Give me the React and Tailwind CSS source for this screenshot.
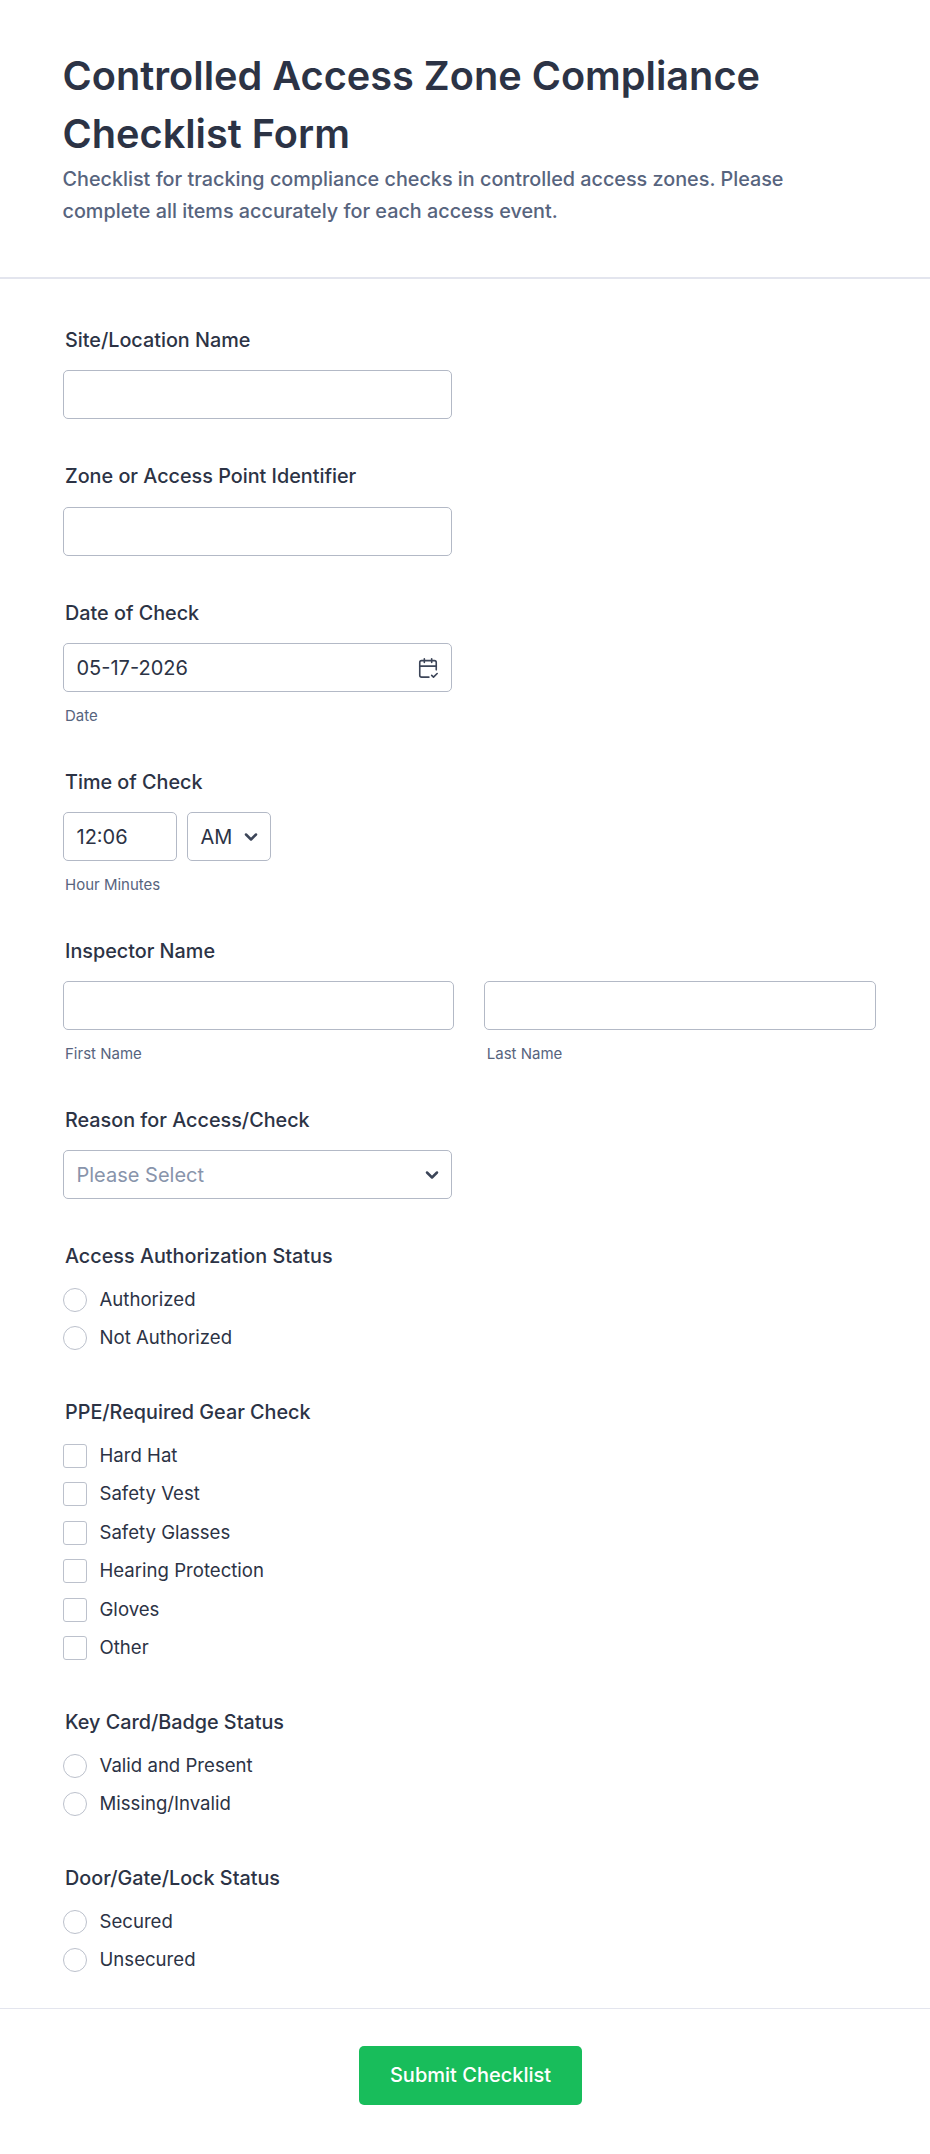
import { CalendarCheck2, ChevronDown } from 'lucide-react';

const FONT = "font-['Inter',sans-serif]";

function Label({ children }) {
    return (
        <div className="mb-[15.5px] px-[2.5px] text-[19.8px] leading-[29px] font-medium text-[#2c3345]">
            {children}
        </div>
    );
}

function Sub({ children }) {
    return (
        <div className="mt-[13px] -mb-[1.5px] px-[2.5px] text-[15px] leading-[21px] text-[#57647e]">
            {children}
        </div>
    );
}

function Box({ className = '', children }) {
    return (
        <div
            className={`flex h-[49px] items-center rounded-[5px] border border-[#b3b9c6] bg-white text-[20px] text-[#2c3345] ${className}`}
        >
            {children}
        </div>
    );
}

function Options({ label, items, square }) {
    return (
        <div className="pb-[5px]">
            <div className="mb-[16.5px] px-[2.5px] text-[19.8px] leading-[29px] font-medium text-[#2c3345]">
                {label}
            </div>
            <div className="flex flex-col gap-[14.5px]">
                {items.map((item) => (
                    <div key={item} className="flex h-[24px] items-center gap-[13px]">
                        <span
                            className={`h-[24px] w-[24px] border border-[#bcc1cc] bg-white ${
                                square ? 'rounded-[3px]' : 'rounded-full'
                            }`}
                        />
                        <span className="text-[18.6px] text-[#2c3345]">{item}</span>
                    </div>
                ))}
            </div>
        </div>
    );
}

export default function App() {
    return (
        <div className={`min-h-[2154px] bg-white ${FONT}`}>
            <header className="border-b-2 border-[#e3e5ee] px-[62.5px] pt-[46.5px] pb-[50.5px]">
                <h1 className="max-w-[760px] text-[39.7px] leading-[58px] font-semibold text-[#2c3345]">
                    Controlled Access Zone Compliance Checklist Form
                </h1>
                <p className="max-w-[760px] text-[19.8px] leading-[32px] font-medium text-[#57647e]">
                    Checklist for tracking compliance checks in controlled access zones. Please
                    complete all items accurately for each access event.
                </p>
            </header>

            <main className="flex flex-col gap-[43px] px-[62.5px] pt-[46.5px]">
                <div>
                    <Label>Site/Location Name</Label>
                    <Box className="w-[389px]" />
                </div>
                <div>
                    <Label>Zone or Access Point Identifier</Label>
                    <Box className="w-[389px]" />
                </div>
                <div>
                    <Label>Date of Check</Label>
                    <Box className="w-[389px] justify-between pr-[12px] pl-[13px]">
                        <span>05-17-2026</span>
                        <CalendarCheck2 size={22} strokeWidth={1.75} className="text-[#3c4558]" />
                    </Box>
                    <Sub>Date</Sub>
                </div>
                <div>
                    <Label>Time of Check</Label>
                    <div className="flex gap-[10px]">
                        <Box className="w-[114px] pl-[13px]">12:06</Box>
                        <Box className="w-[84px] justify-between pr-[9px] pl-[13px]">
                            <span>AM</span>
                            <ChevronDown size={20} strokeWidth={3} className="text-[#3c4558]" />
                        </Box>
                    </div>
                    <Sub>Hour Minutes</Sub>
                </div>
                <div>
                    <Label>Inspector Name</Label>
                    <div className="grid w-[813.5px] grid-cols-2 gap-[30px]">
                        <div>
                            <Box />
                            <Sub>First Name</Sub>
                        </div>
                        <div>
                            <Box />
                            <Sub>Last Name</Sub>
                        </div>
                    </div>
                </div>
                <div>
                    <Label>Reason for Access/Check</Label>
                    <Box className="w-[389px] justify-between pr-[9px] pl-[13px]">
                        <span className="text-[#8894ab]">Please Select</span>
                        <ChevronDown size={20} strokeWidth={3} className="text-[#3c4558]" />
                    </Box>
                </div>
                <Options label="Access Authorization Status" items={['Authorized', 'Not Authorized']} />
                <Options
                    square
                    label="PPE/Required Gear Check"
                    items={['Hard Hat', 'Safety Vest', 'Safety Glasses', 'Hearing Protection', 'Gloves', 'Other']}
                />
                <Options label="Key Card/Badge Status" items={['Valid and Present', 'Missing/Invalid']} />
                <Options label="Door/Gate/Lock Status" items={['Secured', 'Unsecured']} />
            </main>

            <footer className="mt-[30.5px] flex justify-center border-t border-[#e3e5ee] pt-[37px] pb-[50px] pl-[11px]">
                <button className="h-[59px] w-[223px] rounded-[5px] bg-[#18bd5b] text-[20px] font-medium text-white">
                    Submit Checklist
                </button>
            </footer>
        </div>
    );
}
